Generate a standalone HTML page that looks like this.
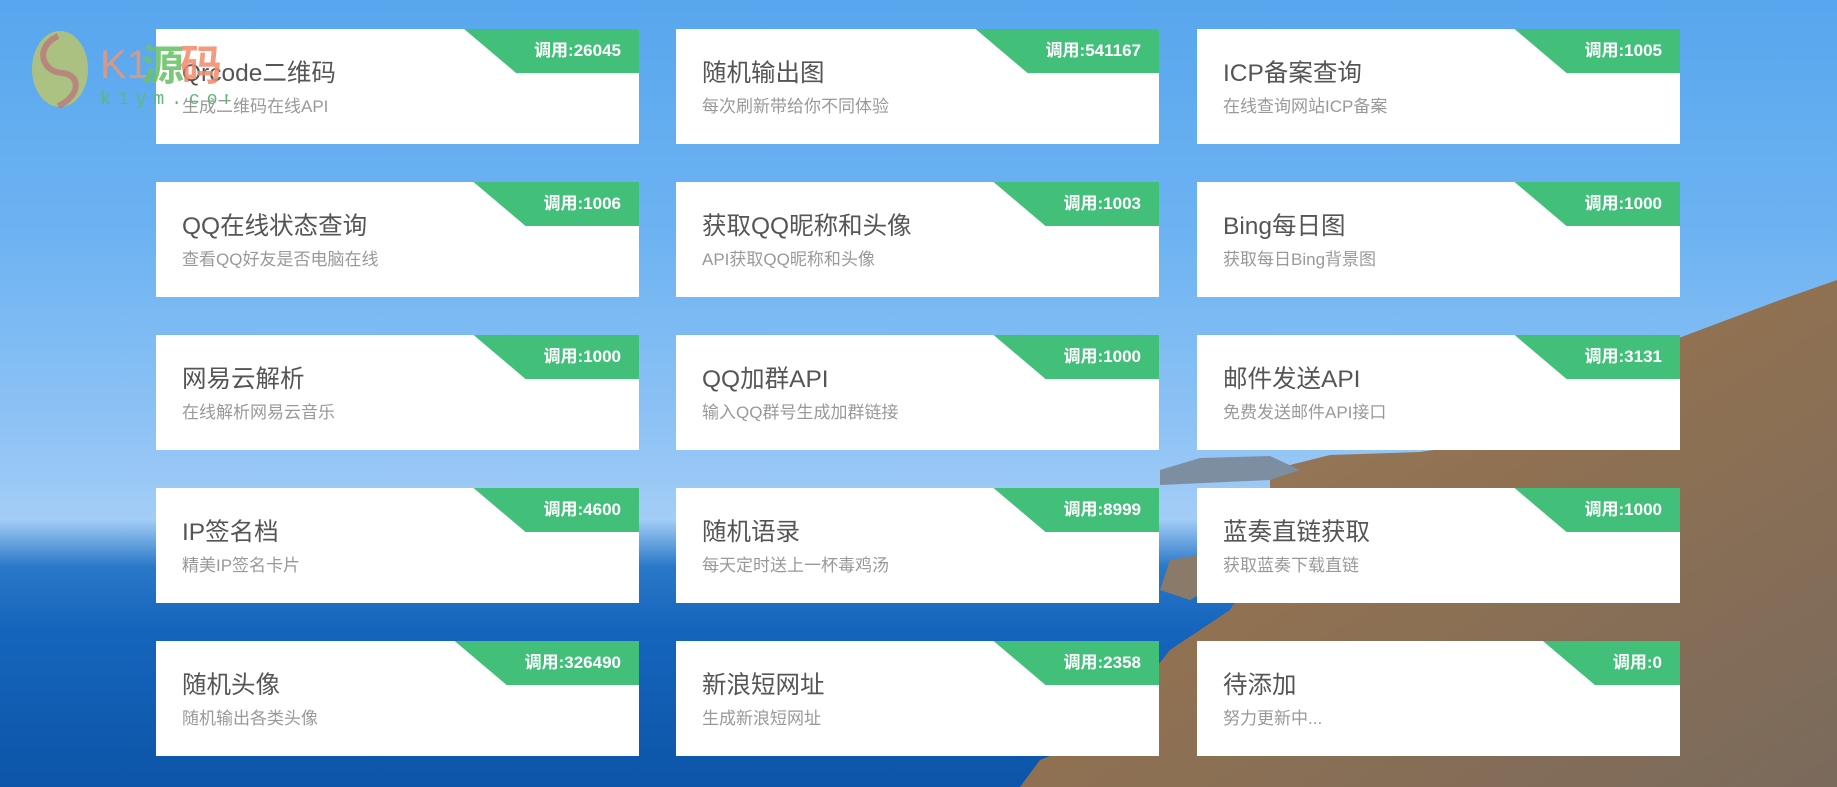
<!DOCTYPE html>
<html><head><meta charset="utf-8"><style>
html,body{margin:0;padding:0;width:1837px;height:787px;overflow:hidden}
body{position:relative;font-family:"Liberation Sans","Noto Sans CJK SC",sans-serif;
background:linear-gradient(180deg,#58a6ee 0%,#6db3f2 30%,#8fc3f5 55%,#a3cdf6 66%,#2a78c8 72%,#1565bd 80%,#0d55a8 100%)}
.bg{position:absolute;left:0;top:0}
.card{position:absolute;width:483px;height:115px;background:#fff;overflow:hidden}
.t{position:absolute;left:26px;top:25px;font-size:24.5px;color:#555;white-space:nowrap}
.s{position:absolute;left:26px;top:63px;font-size:17px;color:#999;white-space:nowrap}
.b{position:absolute;right:0;top:0;height:44px;line-height:44px;background:#42c07a;color:#fff;font-weight:bold;font-size:17px;padding:0 18px 0 70px;clip-path:polygon(0 0,100% 0,100% 100%,52px 100%)}
.logo{position:absolute;left:28px;top:28px;z-index:5}
</style></head><body>
<svg class="bg" width="1837" height="787">
<defs><linearGradient id="r" x1="0" y1="0" x2="1" y2="1"><stop offset="0" stop-color="#a0805e"/><stop offset=".5" stop-color="#8f7152"/><stop offset="1" stop-color="#7a6a5c"/></linearGradient></defs>
<polygon points="1270,470 1330,455 1420,452 1500,440 1560,400 1620,360 1700,330 1780,300 1837,280 1837,787 1020,787 1040,760 1090,740 1130,700 1170,650 1230,610 1260,560 1270,520" fill="url(#r)"/>
<polygon points="1160,470 1200,458 1270,456 1300,470 1270,480 1160,485" fill="#7d8ea0"/>
<polygon points="1170,560 1200,555 1240,570 1190,600 1160,590" fill="#8a7a6a"/>
</svg>
<svg class="logo" width="200" height="82">
<ellipse cx="32" cy="41" rx="28" ry="38" fill="#b9c66e" opacity=".85"/>
<path d="M30 8 C5 20 15 45 35 45 C55 48 50 70 30 78" stroke="#c0607a" stroke-width="6" fill="none" opacity=".6"/>
<text x="72" y="50" font-family="Liberation Sans" font-size="40" fill="#d49a88">K1</text>
<text x="114" y="52" font-family="Noto Sans CJK SC" font-size="42" font-weight="bold" fill="#6cc36a" opacity=".9">源</text>
<text x="152" y="52" font-family="Noto Sans CJK SC" font-size="42" font-weight="bold" fill="#f08a6a" opacity=".85">码</text>
<text x="72" y="76" font-family="Liberation Mono" font-size="18" fill="#5cb87a" letter-spacing="7">k1ym.com</text>
</svg>

<div class="card" style="left:156px;top:29px"><div class="b">调用:26045</div><div class="t">Qrcode二维码</div><div class="s">生成二维码在线API</div></div>
<div class="card" style="left:676px;top:29px"><div class="b">调用:541167</div><div class="t">随机输出图</div><div class="s">每次刷新带给你不同体验</div></div>
<div class="card" style="left:1197px;top:29px"><div class="b">调用:1005</div><div class="t">ICP备案查询</div><div class="s">在线查询网站ICP备案</div></div>

<div class="card" style="left:156px;top:182px"><div class="b">调用:1006</div><div class="t">QQ在线状态查询</div><div class="s">查看QQ好友是否电脑在线</div></div>
<div class="card" style="left:676px;top:182px"><div class="b">调用:1003</div><div class="t">获取QQ昵称和头像</div><div class="s">API获取QQ昵称和头像</div></div>
<div class="card" style="left:1197px;top:182px"><div class="b">调用:1000</div><div class="t">Bing每日图</div><div class="s">获取每日Bing背景图</div></div>

<div class="card" style="left:156px;top:335px"><div class="b">调用:1000</div><div class="t">网易云解析</div><div class="s">在线解析网易云音乐</div></div>
<div class="card" style="left:676px;top:335px"><div class="b">调用:1000</div><div class="t">QQ加群API</div><div class="s">输入QQ群号生成加群链接</div></div>
<div class="card" style="left:1197px;top:335px"><div class="b">调用:3131</div><div class="t">邮件发送API</div><div class="s">免费发送邮件API接口</div></div>

<div class="card" style="left:156px;top:488px"><div class="b">调用:4600</div><div class="t">IP签名档</div><div class="s">精美IP签名卡片</div></div>
<div class="card" style="left:676px;top:488px"><div class="b">调用:8999</div><div class="t">随机语录</div><div class="s">每天定时送上一杯毒鸡汤</div></div>
<div class="card" style="left:1197px;top:488px"><div class="b">调用:1000</div><div class="t">蓝奏直链获取</div><div class="s">获取蓝奏下载直链</div></div>

<div class="card" style="left:156px;top:641px"><div class="b">调用:326490</div><div class="t">随机头像</div><div class="s">随机输出各类头像</div></div>
<div class="card" style="left:676px;top:641px"><div class="b">调用:2358</div><div class="t">新浪短网址</div><div class="s">生成新浪短网址</div></div>
<div class="card" style="left:1197px;top:641px"><div class="b">调用:0</div><div class="t">待添加</div><div class="s">努力更新中...</div></div>
</body></html>
